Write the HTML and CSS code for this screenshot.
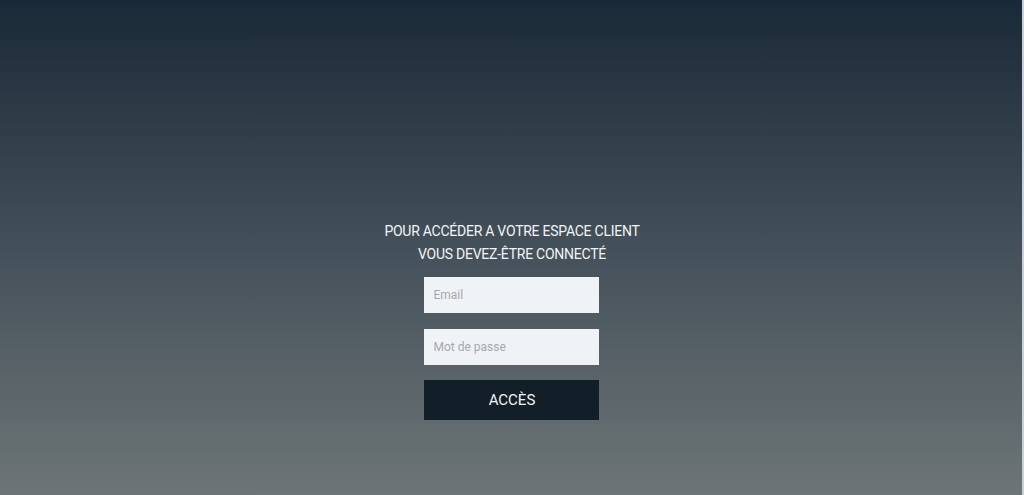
FILE: index.html
```html
<!DOCTYPE html>
<html lang="fr">
<head>
<meta charset="utf-8">
<title>Espace client</title>
<link rel="stylesheet" href="styles.css">
</head>
<body>
<main class="page">
  <form class="login">
    <p class="intro">POUR ACCÉDER A VOTRE ESPACE CLIENT<br>VOUS DEVEZ-ÊTRE CONNECTÉ</p>
    <input class="field" type="email" placeholder="Email">
    <input class="field" type="password" placeholder="Mot de passe">
    <button class="submit" type="button">ACCÈS</button>
  </form>
</main>
</body>
</html>
```
FILE: styles.css
```css
html, body {
  margin: 0;
  padding: 0;
  height: 100%;
}
body {
  font-family: Roboto, "Noto Sans", sans-serif;
  overflow: hidden;
}
.page {
  box-sizing: border-box;
  height: 495px;
  background: linear-gradient(to bottom, #1a2937 0%, #44505a 50%, #6d7576 100%);
  box-shadow: inset -2px 0 0 #c9d0d6;
  display: flex;
  justify-content: center;
  padding-top: 220px;
}
.login {
  display: flex;
  flex-direction: column;
  align-items: center;
}
.intro {
  margin: 0 0 11px;
  color: #f2f4f6;
  font-size: 14px;
  line-height: 23px;
  text-align: center;
  letter-spacing: -0.25px;
}
.field {
  box-sizing: border-box;
  width: 175px;
  height: 36px;
  border: 0;
  background: #f0f3f6;
  padding: 0 9px;
  font-family: Roboto, "Noto Sans", sans-serif;
  font-size: 12px;
  color: #333;
  margin: 0 0 16px;
  outline: none;
}
.field::placeholder {
  color: #a3a9b0;
}
.submit {
  box-sizing: border-box;
  width: 175px;
  height: 40px;
  border: 0;
  background: #121e28;
  color: #f2f4f6;
  font-family: Roboto, "Noto Sans", sans-serif;
  font-size: 15px;
  margin-top: -1px;
  cursor: pointer;
}
```
